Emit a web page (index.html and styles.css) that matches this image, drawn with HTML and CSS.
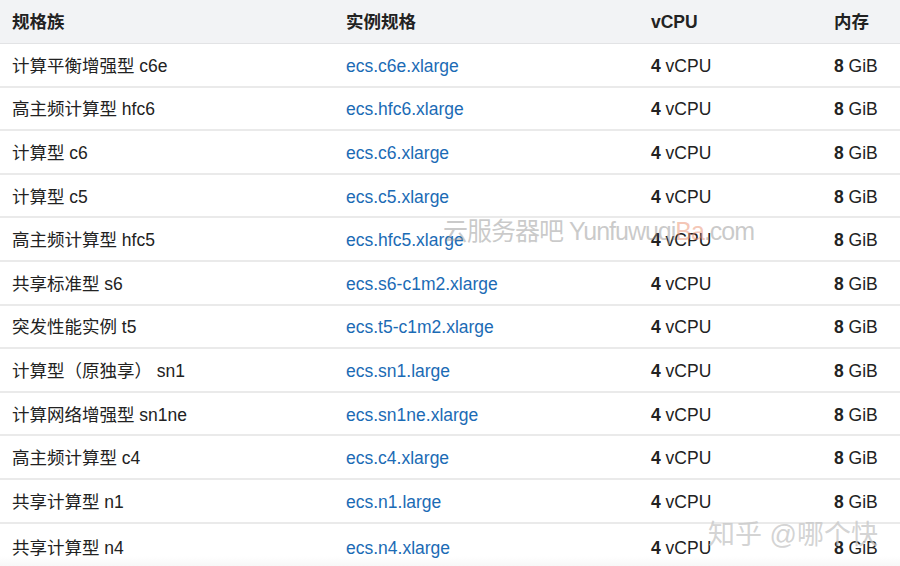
FILE: index.html
```html
<!DOCTYPE html>
<html lang="zh">
<head>
<meta charset="utf-8">
<link rel="stylesheet" href="styles.css">
</head>
<body>
<div class="page">
  <div class="table">
    <div class="row head">
      <div class="cell">规格族</div>
      <div class="cell">实例规格</div>
      <div class="cell">vCPU</div>
      <div class="cell">内存</div>
    </div>
    <div class="row"><div class="cell">计算平衡增强型 c6e</div><div class="cell link">ecs.c6e.xlarge</div><div class="cell"><b>4</b> vCPU</div><div class="cell"><b>8</b> GiB</div></div>
    <div class="row"><div class="cell">高主频计算型 hfc6</div><div class="cell link">ecs.hfc6.xlarge</div><div class="cell"><b>4</b> vCPU</div><div class="cell"><b>8</b> GiB</div></div>
    <div class="row"><div class="cell">计算型 c6</div><div class="cell link">ecs.c6.xlarge</div><div class="cell"><b>4</b> vCPU</div><div class="cell"><b>8</b> GiB</div></div>
    <div class="row"><div class="cell">计算型 c5</div><div class="cell link">ecs.c5.xlarge</div><div class="cell"><b>4</b> vCPU</div><div class="cell"><b>8</b> GiB</div></div>
    <div class="row"><div class="cell">高主频计算型 hfc5</div><div class="cell link">ecs.hfc5.xlarge</div><div class="cell"><b>4</b> vCPU</div><div class="cell"><b>8</b> GiB</div></div>
    <div class="row"><div class="cell">共享标准型 s6</div><div class="cell link">ecs.s6-c1m2.xlarge</div><div class="cell"><b>4</b> vCPU</div><div class="cell"><b>8</b> GiB</div></div>
    <div class="row"><div class="cell">突发性能实例 t5</div><div class="cell link">ecs.t5-c1m2.xlarge</div><div class="cell"><b>4</b> vCPU</div><div class="cell"><b>8</b> GiB</div></div>
    <div class="row"><div class="cell">计算型（原独享） sn1</div><div class="cell link">ecs.sn1.large</div><div class="cell"><b>4</b> vCPU</div><div class="cell"><b>8</b> GiB</div></div>
    <div class="row"><div class="cell">计算网络增强型 sn1ne</div><div class="cell link">ecs.sn1ne.xlarge</div><div class="cell"><b>4</b> vCPU</div><div class="cell"><b>8</b> GiB</div></div>
    <div class="row"><div class="cell">高主频计算型 c4</div><div class="cell link">ecs.c4.xlarge</div><div class="cell"><b>4</b> vCPU</div><div class="cell"><b>8</b> GiB</div></div>
    <div class="row"><div class="cell">共享计算型 n1</div><div class="cell link">ecs.n1.large</div><div class="cell"><b>4</b> vCPU</div><div class="cell"><b>8</b> GiB</div></div>
    <div class="row last"><div class="cell">共享计算型 n4</div><div class="cell link">ecs.n4.xlarge</div><div class="cell"><b>4</b> vCPU</div><div class="cell"><b>8</b> GiB</div></div>
  </div>
  <div class="wm wm-site">云服务器吧 Yunfuwuqi<span class="ba">Ba</span>.com</div>
  <div class="wm wm-zhihu">知乎 @哪个快</div>
</div>
</body>
</html>
```

FILE: styles.css
```css
* { box-sizing: border-box; }
html, body { margin: 0; padding: 0; background: #fff; }
body {
  font-family: "Liberation Sans", Arial, "Noto Sans CJK SC", sans-serif;
  font-size: 17.5px;
  color: #222;
}
.page {
  position: relative;
  width: 900px;
  height: 566px;
  overflow: hidden;
}
.table {
  display: flex;
  flex-direction: column;
}
.row {
  display: grid;
  grid-template-columns: 334px 305px 183px 1fr;
  padding-left: 12px;
  height: 43.6px;
  align-items: center;
  border-bottom: 2px solid #eaeaea;
}
.row > .cell { padding-top: 2px; }
.row.head {
  height: 44px;
  background: #f2f3f5;
  font-weight: bold;
  color: #222;
  border-bottom: 1px solid #e2e3e5;
}
.row.head > .cell { padding-top: 0; }
.row.last {
  border-bottom: none;
  height: 46px;
  background: linear-gradient(#fff 70%, #f4f4f4 100%);
}
.cell {
  white-space: nowrap;
  line-height: 20px;
}
.link { color: #1b6bb5; }
.cell b { font-weight: bold; }
.wm {
  position: absolute;
  white-space: nowrap;
  font-family: "Liberation Sans", Arial, "Noto Sans CJK SC", sans-serif;
  pointer-events: none;
}
.wm-site {
  left: 443px;
  top: 211px;
  font-size: 25px;
  color: rgba(150, 150, 150, 0.5);
  letter-spacing: -1px;
}
.wm-site .ba { color: rgba(235, 150, 120, 0.55); }
.wm-zhihu {
  left: 708px;
  top: 513px;
  font-size: 27px;
  color: rgba(200, 200, 200, 0.8);
  letter-spacing: 0;
}
```
